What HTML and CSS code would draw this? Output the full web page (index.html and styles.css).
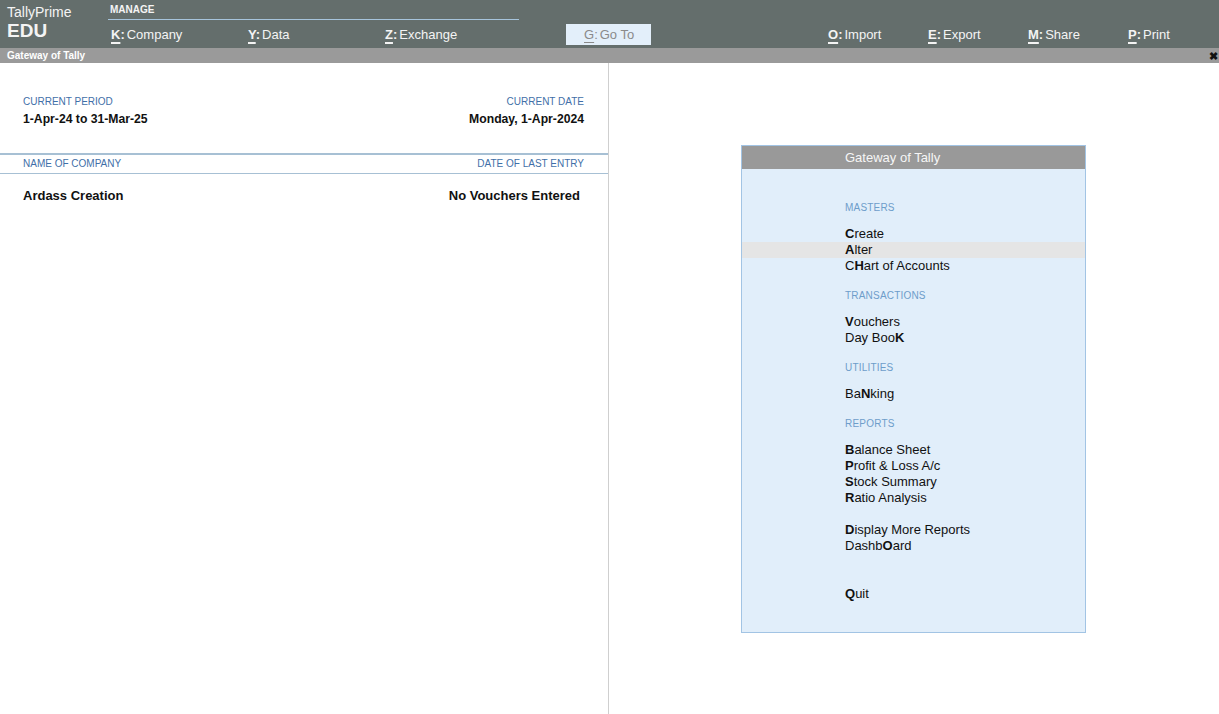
FILE: index.html
```html
<!DOCTYPE html>
<html lang="en">
<head>
<meta charset="utf-8">
<title>TallyPrime - Gateway of Tally</title>
<link rel="stylesheet" href="styles.css">
</head>
<body>
<header class="topbar">
  <div class="brand">
    <div class="product">TallyPrime</div>
    <div class="edition">EDU</div>
  </div>
  <div class="manage">
    <div class="manage-label">MANAGE</div>
    <nav class="manage-items">
      <span class="menu-item w137"><b class="key">K</b><b>:</b><span class="txt">Company</span></span>
      <span class="menu-item w137"><b class="key">Y</b><b>:</b><span class="txt">Data</span></span>
      <span class="menu-item"><b class="key">Z</b><b>:</b><span class="txt">Exchange</span></span>
    </nav>
  </div>
  <div class="goto"><span class="key">G</span>:<span class="txt">Go To</span></div>
  <nav class="actions">
    <span class="menu-item w100"><b class="key">O</b><b>:</b><span class="txt">Import</span></span>
    <span class="menu-item w100"><b class="key">E</b><b>:</b><span class="txt">Export</span></span>
    <span class="menu-item w100"><b class="key">M</b><b>:</b><span class="txt">Share</span></span>
    <span class="menu-item"><b class="key">P</b><b>:</b><span class="txt">Print</span></span>
  </nav>
</header>
<div class="titlebar">
  <span>Gateway of Tally</span>
  <span class="close">&#x2716;</span>
</div>
<main class="workspace">
  <section class="info">
    <div class="period">
      <div class="pair">
        <div class="label">CURRENT PERIOD</div>
        <div class="label">CURRENT DATE</div>
      </div>
      <div class="pair values">
        <div>1-Apr-24 to 31-Mar-25</div>
        <div>Monday, 1-Apr-2024</div>
      </div>
    </div>
    <div class="pair colhead">
      <div class="label">NAME OF COMPANY</div>
      <div class="label">DATE OF LAST ENTRY</div>
    </div>
    <div class="pair company">
      <div>Ardass Creation</div>
      <div class="last">No Vouchers Entered</div>
    </div>
  </section>
  <section class="gateway-area">
    <div class="gateway">
      <div class="gw-head">Gateway of Tally</div>
      <div class="gw-list">
        <div class="gw-label first">MASTERS</div>
        <div class="gw-item"><b>C</b>reate</div>
        <div class="gw-item active"><b>A</b>lter</div>
        <div class="gw-item">C<b>H</b>art of Accounts</div>
        <div class="gw-label">TRANSACTIONS</div>
        <div class="gw-item"><b>V</b>ouchers</div>
        <div class="gw-item">Day Boo<b>K</b></div>
        <div class="gw-label">UTILITIES</div>
        <div class="gw-item">Ba<b>N</b>king</div>
        <div class="gw-label">REPORTS</div>
        <div class="gw-item"><b>B</b>alance Sheet</div>
        <div class="gw-item"><b>P</b>rofit &amp; Loss A/c</div>
        <div class="gw-item"><b>S</b>tock Summary</div>
        <div class="gw-item"><b>R</b>atio Analysis</div>
        <div class="gw-item spacer-1"><b>D</b>isplay More Reports</div>
        <div class="gw-item">Dashb<b>O</b>ard</div>
        <div class="gw-item spacer-2"><b>Q</b>uit</div>
      </div>
    </div>
  </section>
</main>
</body>
</html>
```

FILE: styles.css
```css
* { box-sizing: border-box; }
html, body { margin: 0; padding: 0; }
body {
  width: 1219px;
  height: 714px;
  overflow: hidden;
  background: #ffffff;
  font-family: "Liberation Sans", Arial, sans-serif;
  color: #111;
  display: flex;
  flex-direction: column;
}

/* Top bar */
.topbar {
  height: 48px;
  background: #646e6c;
  color: #f4f4f4;
  display: flex;
  align-items: stretch;
  flex: none;
}
.brand {
  width: 108px;
  padding: 4px 0 0 7px;
}
.product { font-size: 14px; line-height: 16px; }
.edition { font-size: 19px; font-weight: bold; line-height: 22px; }
.manage {
  width: 411px;
  padding-top: 4px;
}
.manage-label {
  font-size: 10px;
  font-weight: bold;
  line-height: 12px;
  padding-left: 2px;
  padding-bottom: 3px;
  border-bottom: 1px solid #a6c4dc;
}
.manage-items {
  display: flex;
  padding: 7px 0 0 3px;
}
.menu-item {
  font-size: 13px;
  line-height: 15px;
  white-space: nowrap;
}
.menu-item b { font-weight: bold; }
.txt { margin-left: 2px; }
.w137 { width: 137px; }
.w100 { width: 100px; }
.key {
  text-decoration: underline;
  text-decoration-thickness: 2px;
  text-underline-offset: 3px;
}
.goto {
  margin: 24px 0 3px 47px;
  width: 85px;
  background: #e3effa;
  color: #8a8a8a;
  font-size: 13px;
  line-height: 21px;
  padding-left: 18px;
  white-space: nowrap;
}
.goto .key { text-decoration-thickness: 1px; }
.actions {
  display: flex;
  padding: 27px 0 0 177px;
}

/* Title bar */
.titlebar {
  height: 15px;
  background: #9a9a9a;
  color: #ffffff;
  font-size: 10px;
  font-weight: bold;
  line-height: 15px;
  padding: 0 1px 0 7px;
  display: flex;
  justify-content: space-between;
  flex: none;
}
.close {
  color: #111;
  font-size: 11px;
  line-height: 17px;
}

/* Workspace */
.workspace {
  flex: 1;
  display: flex;
}
.info {
  width: 609px;
  border-right: 1px solid #cfcfcf;
}
.pair {
  display: flex;
  justify-content: space-between;
  padding: 0 24px 0 23px;
}
.label {
  font-size: 10px;
  line-height: 14px;
  color: #3f6fa8;
}
.period {
  padding-top: 32px;
  padding-bottom: 27px;
  border-bottom: 2px solid #a7c0d4;
}
.values {
  margin-top: 3px;
  font-size: 12.2px;
  font-weight: bold;
  line-height: 14px;
}
.colhead {
  height: 19px;
  align-items: center;
  border-bottom: 1px solid #a7c0d4;
}
.company {
  margin-top: 14px;
  font-size: 13px;
  font-weight: bold;
  line-height: 16px;
}
.company .last { margin-right: 4px; }

/* Gateway menu */
.gateway-area {
  flex: 1;
  display: flex;
  justify-content: flex-start;
  align-items: flex-start;
  padding: 82px 0 0 132px;
}
.gateway {
  width: 345px;
  background: #e1eefa;
  border: 1px solid #a2c4e4;
}
.gw-head {
  height: 23px;
  background: #999999;
  color: #f6f6f6;
  font-size: 13px;
  line-height: 23px;
  padding-left: 103px;
}
.gw-list {
  padding: 17px 0 30px;
}
.gw-label {
  font-size: 10px;
  letter-spacing: 0.2px;
  line-height: 16px;
  color: #6e9dca;
  padding-left: 103px;
  margin: 14px 0 10px;
}
.gw-item {
  font-size: 13px;
  line-height: 16px;
  height: 16px;
  padding-left: 103px;
  color: #111;
}
.gw-item b { font-weight: bold; }
.gw-item.active { background: #e5e5e5; }
.spacer-1 { margin-top: 16px; }
.spacer-2 { margin-top: 32px; }
```
